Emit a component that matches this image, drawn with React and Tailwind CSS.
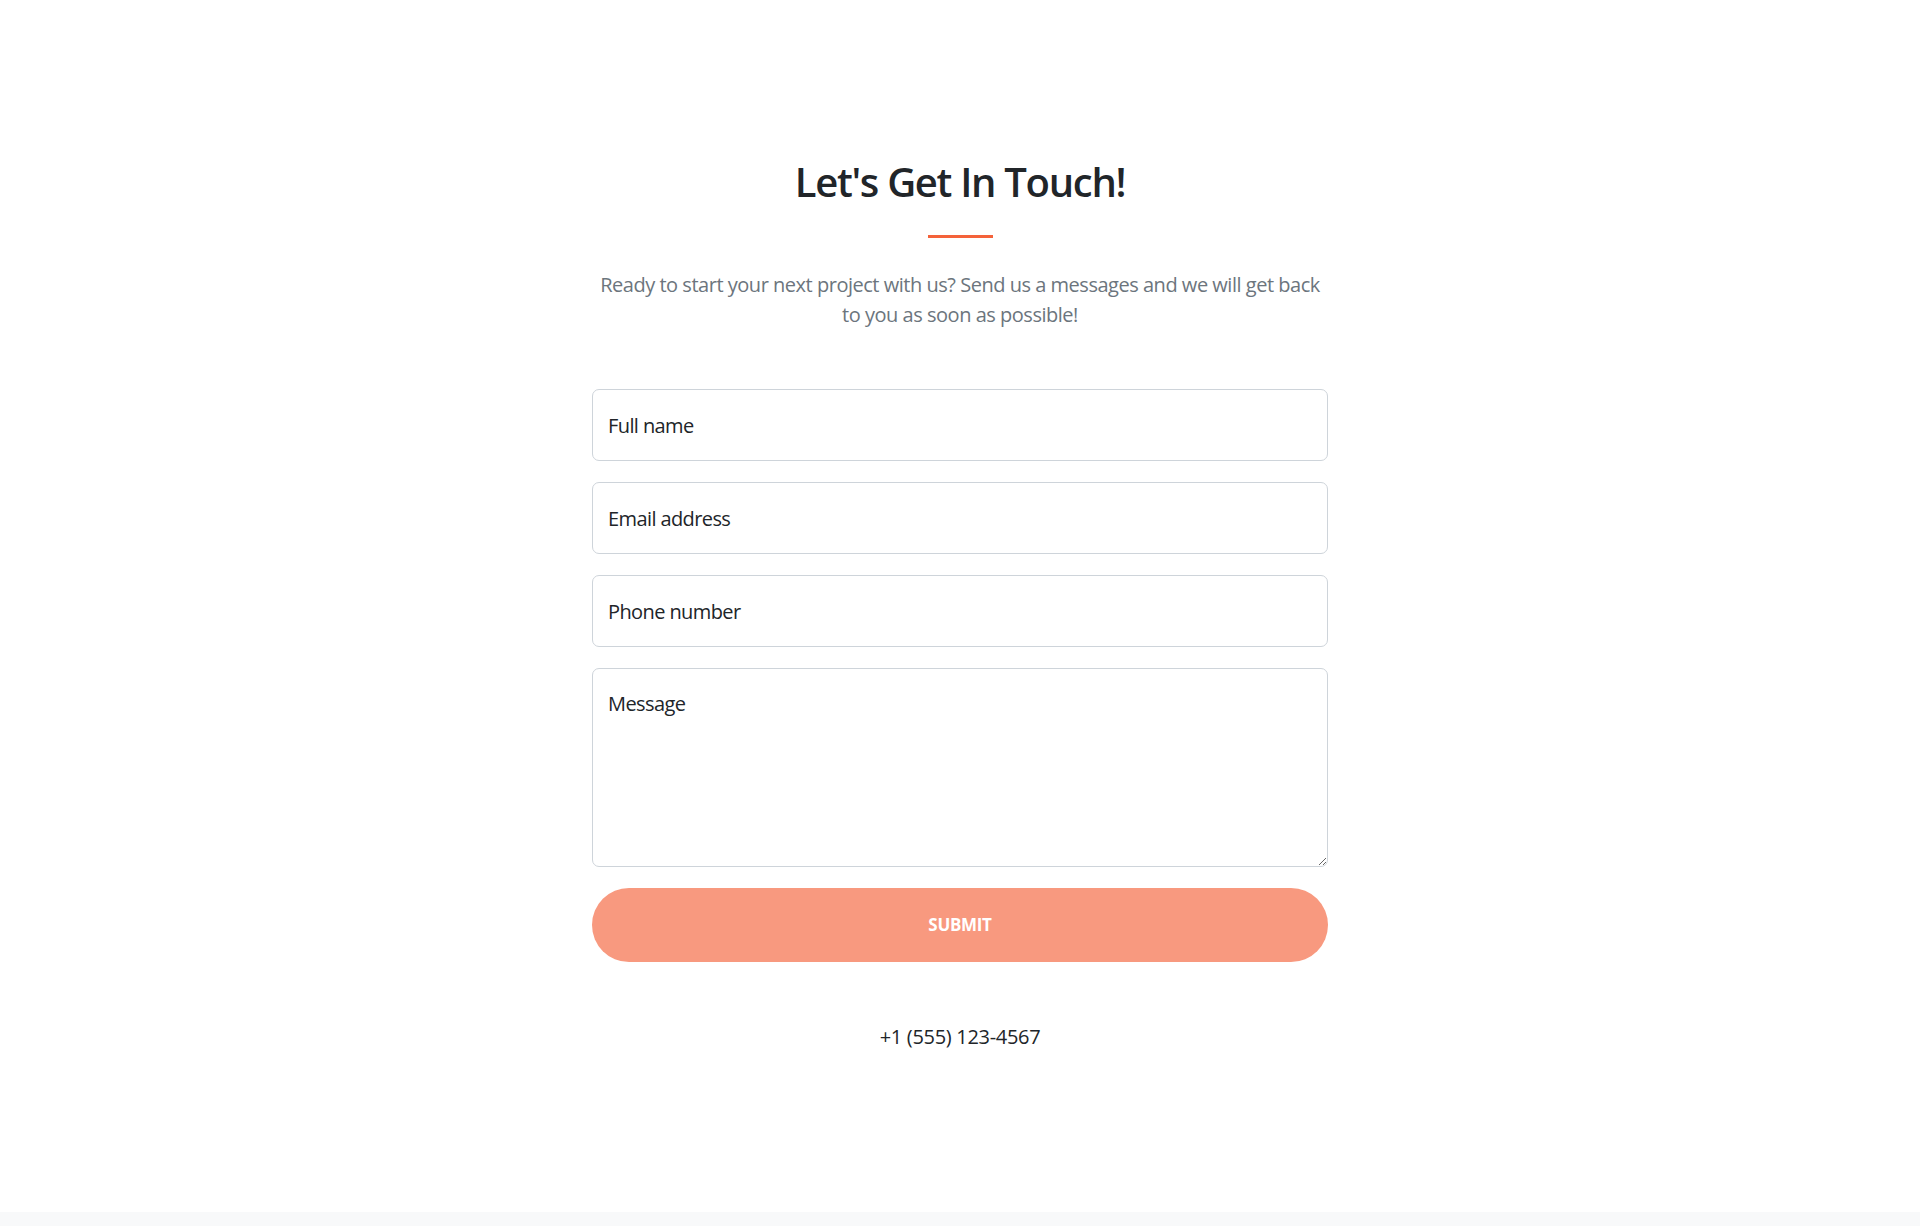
export default function App() {
  const font = { fontFamily: '"Open Sans", "Noto Sans", sans-serif' };
  const inputCls =
    "h-[72px] w-full rounded-[7px] border border-[#ced4da] bg-white px-[15px] text-[20px] text-[#212529] placeholder:text-[#212529] outline-none tracking-[-0.6px]";
  return (
    <div className="w-full min-h-[1226px] bg-white flex flex-col" style={font}>
      <main className="flex-1 flex flex-col items-center pt-[158px]">
        <h2 className="text-[40px] leading-[48px] font-semibold text-[#212529] tracking-[-1.3px]">
          Let's Get In Touch!
        </h2>
        <div className="w-[65px] h-[3px] bg-[#f4623a] mt-[29px]" />
        <p className="mt-[32px] text-[20px] leading-[30px] text-[#6c757d] text-center tracking-[-0.48px]">
          Ready to start your next project with us? Send us a messages and we will get back
          <br />
          to you as soon as possible!
        </p>
        <form className="mt-[59px] w-[736px] flex flex-col gap-[21px]" onSubmit={(e) => e.preventDefault()}>
          <input type="text" placeholder="Full name" className={inputCls} />
          <input type="email" placeholder="Email address" className={inputCls} />
          <input type="tel" placeholder="Phone number" className={inputCls} />
          <textarea
            placeholder="Message"
            className="h-[199px] w-full rounded-[7px] border border-[#ced4da] bg-white px-[15px] pt-[20px] text-[20px] leading-[30px] text-[#212529] placeholder:text-[#212529] outline-none tracking-[-0.6px] resize-y"
          />
          <button
            type="submit"
            disabled
            className="h-[74px] w-full rounded-full bg-[#f8997f] text-white text-[17px] font-bold uppercase tracking-[-0.3px]"
          >
            Submit
          </button>
        </form>
        <div className="mt-[60px] text-[20px] leading-[30px] text-[#212529] tracking-[-0.3px]">+1 (555) 123-4567</div>
      </main>
      <div className="h-[14px] bg-[#f8f9fa]" />
    </div>
  );
}
